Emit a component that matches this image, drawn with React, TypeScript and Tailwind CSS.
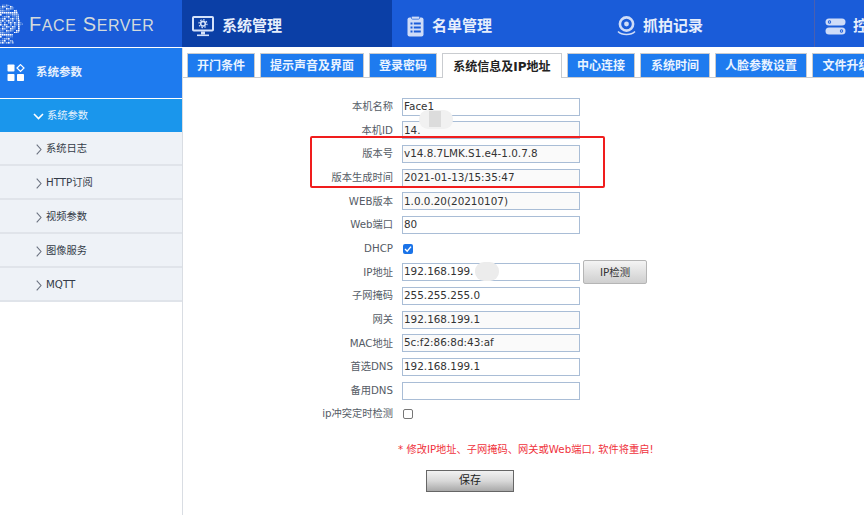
import React from "react";

const font = { fontFamily: '"DejaVu Sans", "Noto Sans CJK SC", sans-serif' };

function Head() {
  const dots: React.ReactNode[] = [];
  for (let y = 0; y < 20; y++) {
    for (let x = 0; x < 12; x++) {
      const h = (x * 7 + y * 13 + x * y) % 11;
      if (h < 2) continue;
      dots.push(<rect key={`${x}-${y}`} x={x * 2} y={y * 2} width={1.6} height={1.6} fill={h > 7 ? "#ffffff" : h > 4 ? "#a9c4ee" : "#5f8fe0"} />);
    }
  }
  return (
    <svg width="24" height="40" viewBox="0 0 24 40" className="mt-[1px] shrink-0">
      <defs>
        <clipPath id="headClip">
          <path d="M0 1 C8 -1 16 2 18 9 C19 12 19 14 19 15 L23 20 L20 22 L20 26 C20 29 17 29 13 29 L12 36 L16 40 L0 40 Z" />
        </clipPath>
      </defs>
      <g clipPath="url(#headClip)">{dots}</g>
    </svg>
  );
}

function Monitor() {
  return (
    <svg width="22" height="21" viewBox="0 0 22 21" className="shrink-0">
      <rect x="1" y="1" width="20" height="13.5" rx="0.8" fill="none" stroke="#d5e2fa" strokeWidth="2" />
      <circle cx="11" cy="7.7" r="2.3" fill="none" stroke="#d5e2fa" strokeWidth="1.6" />
      <circle cx="11" cy="7.7" r="4" fill="none" stroke="#d5e2fa" strokeWidth="1.2" strokeDasharray="1.5 1.6" />
      <rect x="9" y="15.5" width="4" height="3" fill="#d5e2fa" />
      <rect x="5" y="18.5" width="12" height="1.6" fill="#d5e2fa" />
    </svg>
  );
}

function Clipboard() {
  return (
    <svg width="17" height="21" viewBox="0 0 17 21" className="shrink-0">
      <rect x="0.5" y="1.5" width="16" height="19" rx="2" fill="#cfdcf8" />
      <rect x="4.5" y="0.2" width="8" height="3" rx="1" fill="#cfdcf8" stroke="#1a5cd9" strokeWidth="0.7" />
      {[6.5, 10.5, 14.5].map((y) => (
        <g key={y} fill="#1a5cd9">
          <rect x="3.5" y={y} width="2" height="2" />
          <rect x="6.8" y={y} width="7" height="2" />
        </g>
      ))}
    </svg>
  );
}

function Cam() {
  return (
    <svg width="19" height="20" viewBox="0 0 19 20" className="shrink-0">
      <circle cx="9.5" cy="8" r="6.6" fill="none" stroke="#cfdcf8" strokeWidth="2.6" />
      <circle cx="9.5" cy="8" r="2.4" fill="#cfdcf8" />
      <path d="M1 15.5 C5 19.5 14 19.5 18 15.5" fill="none" stroke="#cfdcf8" strokeWidth="1.6" />
    </svg>
  );
}

function Toggles() {
  return (
    <svg width="21" height="17" viewBox="0 0 21 17" className="shrink-0">
      <rect x="0.5" y="0.5" width="20" height="7" rx="3.5" fill="#cfdcf8" />
      <circle cx="4.5" cy="4" r="1.7" fill="#1a5cd9" />
      <circle cx="4.5" cy="4" r="0.8" fill="#cfdcf8" />
      <rect x="0.5" y="9.5" width="20" height="7" rx="3.5" fill="#cfdcf8" />
      <circle cx="16.5" cy="13" r="1.7" fill="#1a5cd9" />
      <circle cx="16.5" cy="13" r="0.8" fill="#cfdcf8" />
    </svg>
  );
}

function GridIcon() {
  return (
    <svg width="18" height="18" viewBox="0 0 18 18" className="shrink-0">
      <rect x="0.5" y="0.5" width="7" height="7" rx="0.8" fill="#fff" />
      <rect x="0.5" y="10" width="7" height="7" rx="0.8" fill="#fff" />
      <rect x="10" y="10" width="7" height="7" rx="0.8" fill="#fff" />
      <path d="M13.5 0.6 L17 4 L13.5 7.4 L10 4 Z" fill="none" stroke="#fff" strokeWidth="1.2" />
    </svg>
  );
}

function Chevron({ down }: { down?: boolean }) {
  return down ? (
    <svg width="11" height="7" viewBox="0 0 11 7" className="shrink-0">
      <path d="M1 1 L5.5 5.5 L10 1" fill="none" stroke="#fff" strokeWidth="1.6" />
    </svg>
  ) : (
    <svg width="6" height="11" viewBox="0 0 6 11" className="shrink-0">
      <path d="M0.7 0.7 L5 5.5 L0.7 10.3" fill="none" stroke="#6b7280" strokeWidth="1.1" />
    </svg>
  );
}

function NavItem({ icon, label, active, w, gap }: { icon: React.ReactNode; label: string; active?: boolean; w: string; gap: string }) {
  return (
    <div className={`flex h-full shrink-0 items-center pt-[5px] text-[15px] font-bold text-[#e6eefc] ${w} ${gap} ${active ? "bg-[#0b3fa6] pl-[10px]" : "pl-[15px]"}`}>
      {icon}
      <span className="whitespace-nowrap">{label}</span>
    </div>
  );
}

const tabs = [
  { t: "开门条件", w: "w-[68px]" },
  { t: "提示声音及界面", w: "w-[104px]" },
  { t: "登录密码", w: "w-[68px]" },
  { t: "系统信息及IP地址", w: "w-[120px]", active: true },
  { t: "中心连接", w: "w-[68px]" },
  { t: "系统时间", w: "w-[70px]" },
  { t: "人脸参数设置", w: "w-[92px]" },
  { t: "文件升级", w: "w-[69px]" },
];

const side = ["系统日志", "HTTP订阅", "视频参数", "图像服务", "MQTT"];

type Row = { l: string; v?: string; ro?: boolean; kind?: "check" | "uncheck"; btn?: boolean };
const rows: Row[] = [
  { l: "本机名称", v: "Face1" },
  { l: "本机ID", v: "14.", ro: true },
  { l: "版本号", v: "v14.8.7LMK.S1.e4-1.0.7.8", ro: true },
  { l: "版本生成时间", v: "2021-01-13/15:35:47", ro: true },
  { l: "WEB版本", v: "1.0.0.20(20210107)", ro: true },
  { l: "Web端口", v: "80" },
  { l: "DHCP", kind: "check" },
  { l: "IP地址", v: "192.168.199.", btn: true },
  { l: "子网掩码", v: "255.255.255.0" },
  { l: "网关", v: "192.168.199.1", ro: true },
  { l: "MAC地址", v: "5c:f2:86:8d:43:af", ro: true },
  { l: "首选DNS", v: "192.168.199.1" },
  { l: "备用DNS", v: "" },
  { l: "ip冲突定时检测", kind: "uncheck" },
];

export default function App() {
  return (
    <div className="relative flex h-[515px] w-[864px] flex-col overflow-hidden bg-white" style={font}>
      <header className="flex h-[47px] shrink-0 bg-[#1a5cd9]">
        <div className="flex h-full w-[182px] shrink-0 items-center">
          <Head />
          <span className="ml-[5px] whitespace-nowrap text-[20px] tracking-[0.6px] text-[#d3dadc] [font-family:'Liberation_Sans',sans-serif]">
            F<span className="text-[16px]">ACE</span> S<span className="text-[16px]">ERVER</span>
          </span>
        </div>
        <NavItem active icon={<Monitor />} label="系统管理" w="w-[210px]" gap="gap-[8px]" />
        <NavItem icon={<Clipboard />} label="名单管理" w="w-[210px]" gap="gap-[8px]" />
        <NavItem icon={<Cam />} label="抓拍记录" w="w-[212px]" gap="gap-[7px]" />
        <div className="flex h-full flex-1 items-center gap-[7px] border-l border-[#4a5fb0] pl-[10px] pt-[5px] text-[15px] font-bold text-[#e6eefc]">
          <Toggles />
          <span className="whitespace-nowrap">控</span>
        </div>
      </header>

      <div className="flex min-h-0 flex-1 border-t border-white">
        <aside className="flex w-[183px] shrink-0 flex-col border-r border-[#d9dde3]">
          <div className="flex h-[50px] shrink-0 items-center gap-[11px] bg-[#1e7bef] pl-[7px] text-[11.5px] font-bold text-[#e6f0fd]">
            <GridIcon />
            <span>系统参数</span>
          </div>
          <div className="mt-[1px] flex h-[33px] shrink-0 items-center gap-[3px] bg-[#1a96ec] pl-[33px] pt-[1px] text-[10.25px] text-[#e6f3fd]">
            <Chevron down />
            <span>系统参数</span>
          </div>
          {side.map((s) => (
            <div key={s} className="flex h-[34px] shrink-0 items-center gap-[4px] border-b-2 border-[#e0e4ea] bg-[#eef2f7] pl-[36px] pt-[2px] text-[10.25px] text-[#333b47]">
              <Chevron />
              <span>{s}</span>
            </div>
          ))}
        </aside>

        <main className="relative min-w-0 flex-1 overflow-hidden">
          <div className="flex h-[30px] items-end gap-[5px] border-b border-[#c9ccd0] pl-[4px]">
            {tabs.map((t) =>
              t.active ? (
                <div key={t.t} className={`-mb-[1px] flex h-[25px] shrink-0 items-center justify-center whitespace-nowrap border border-b-0 border-[#c9ccd0] bg-white pt-[1px] text-[12px] font-bold text-[#222] ${t.w}`}>
                  {t.t}
                </div>
              ) : (
                <div key={t.t} className={`flex h-[24px] shrink-0 items-center justify-center whitespace-nowrap border border-b-0 border-[#c9ccd0] bg-[#1e7bef] text-[12px] font-bold text-[#eaf3ff] ${t.w}`}>
                  {t.t}
                </div>
              )
            )}
          </div>

          <div className="pt-[17px]">
            {rows.map((r) => (
              <div key={r.l} className="flex h-[23.65px] items-center">
                <label className="w-[210px] shrink-0 whitespace-nowrap text-right text-[10.25px] text-[#555c66]">{r.l}</label>
                {r.kind ? (
                  <div className="ml-[10px] flex items-center">
                    {r.kind === "check" ? (
                      <span className="flex h-[10px] w-[10px] items-center justify-center rounded-[2px] bg-[#1a73e8]">
                        <svg width="8" height="8" viewBox="0 0 8 8">
                          <path d="M1 4 L3.2 6.2 L7 1.6" fill="none" stroke="#fff" strokeWidth="1.4" />
                        </svg>
                      </span>
                    ) : (
                      <span className="h-[10px] w-[10px] rounded-[2px] border border-[#767676] bg-white" />
                    )}
                  </div>
                ) : (
                  <div className={`ml-[9px] flex h-[18px] w-[178px] shrink-0 items-center border border-[#a9bdd6] pl-[1px] text-[10.4px] text-[#333] ${r.ro ? "bg-[#fafafa]" : "bg-white"}`}>
                    {r.v}
                  </div>
                )}
                {r.btn && (
                  <div className="ml-[3px] flex h-[24px] w-[64px] shrink-0 items-center justify-center rounded-[2px] border border-[#b5b5b5] bg-gradient-to-b from-[#f4f4f4] to-[#cfcfcf] text-[10.4px] text-[#333]">
                    IP检测
                  </div>
                )}
              </div>
            ))}
          </div>

          <p className="mt-[16px] pl-[215px] text-[10.25px] whitespace-nowrap text-[#f0323c]">* 修改IP地址、子网掩码、网关或Web端口, 软件将重启!</p>
          <div className="ml-[243px] mt-[13px] flex h-[22px] w-[88px] items-center justify-center border border-[#666] bg-gradient-to-b from-[#f2f2f2] via-[#d8d8d8] to-[#a9a9a9] text-[11px] text-[#222]">
            保存
          </div>

          {/* mosaic blurs over the hidden digits */}
          <div className="absolute left-[236px] top-[62px] h-[19px] w-[34px] rounded-[9px] bg-[#f1f1f1]">
            <div className="ml-[10px] mt-[1px] h-[16px] w-[12px] bg-[#dcdcdc]" />
          </div>
          <div className="absolute left-[292px] top-[214px] h-[19px] w-[24px] rounded-[9px] bg-[#ececec]" />

          {/* red annotation box */}
          <div className="absolute left-[127px] top-[88px] h-[52px] w-[295px] rounded-[2px] border-2 border-[#f01d1d]" />
        </main>
      </div>
    </div>
  );
}
